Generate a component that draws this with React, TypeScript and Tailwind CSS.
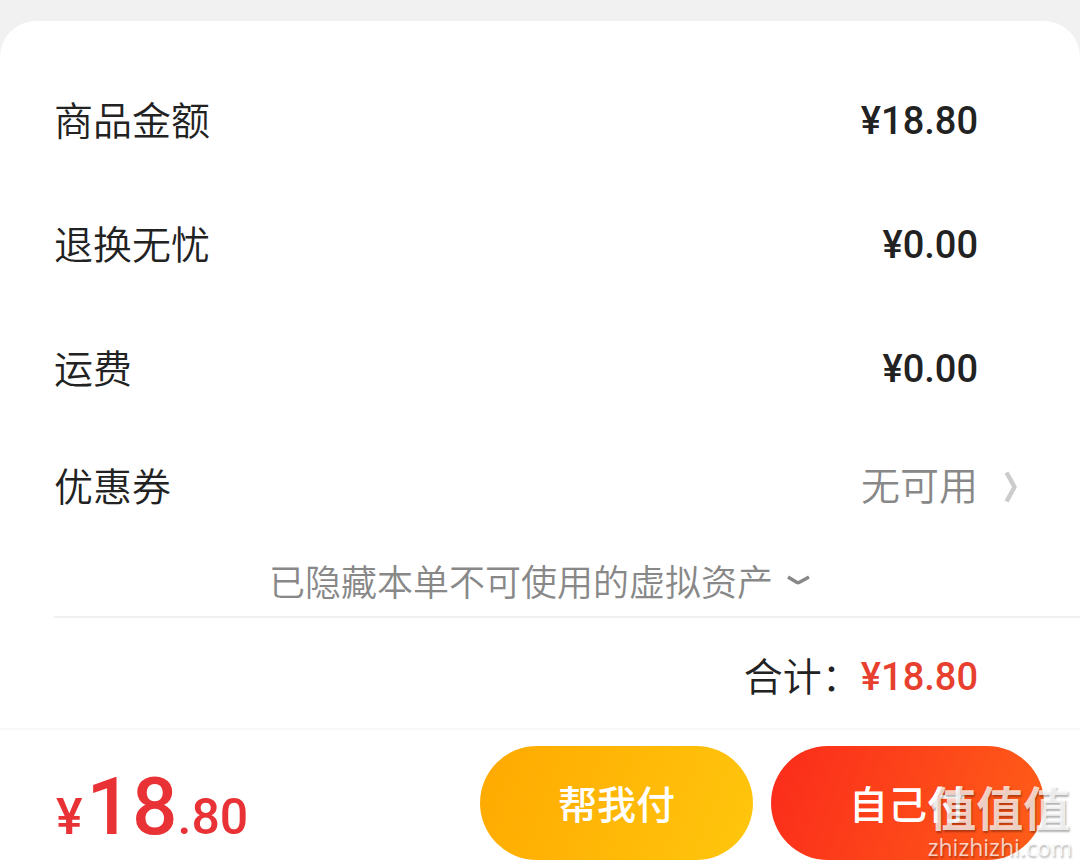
import type { ReactNode } from "react";

function Row({ label, children }: { label: string; children: ReactNode }) {
  return (
    <div className="flex h-[124px] items-center pl-[54px] pr-[102px]">
      <dt className="flex-1 pb-1.5">{label}</dt>
      <dd className="font-['Roboto',sans-serif] text-[38px] font-medium">{children}</dd>
    </div>
  );
}

function Watermark() {
  return (
    <div
      aria-hidden="true"
      className="pointer-events-none absolute right-2 bottom-0 flex flex-col items-center text-white/75 [text-shadow:1px_2px_2px_rgba(0,0,0,0.3)]"
    >
      <span className="text-[47px] leading-[46px] font-bold">值值值</span>
      <span className="font-['Open_Sans',sans-serif] text-[23px] leading-[36px] font-normal">zhizhizhi.com</span>
    </div>
  );
}

export default function App() {
  return (
    <div className="relative flex min-h-screen flex-col bg-[#f1f1f1] pt-[21px] font-['Noto_Sans_CJK_SC',sans-serif] text-[39px] leading-[56px] font-[350] text-[#222222]">
      <main className="flex-1 rounded-t-[36px] bg-white pt-[38px]">
        <dl>
          <Row label="商品金额">¥18.80</Row>
          <Row label="退换无忧">¥0.00</Row>
          <Row label="运费">¥0.00</Row>
        </dl>
        <button type="button" className="flex h-[112px] w-full items-center pl-[54px] pr-[54px] text-left">
          <span className="flex-1 pb-1.5">优惠券</span>
          <span className="pb-2 text-[#888888]">无可用</span>
          <span className="flex w-12 justify-end pr-2">
            <svg width="14" height="32" viewBox="0 0 14 32" fill="none" stroke="#cccccc" strokeWidth="4.5" strokeLinejoin="round" aria-hidden="true">
              <path d="M2.5 1.5 L10.5 16 L2.5 30.5" />
            </svg>
          </span>
        </button>
        <button type="button" className="flex h-[73px] w-full items-center justify-center gap-3 text-[36px] text-[#888888]">
          <span>已隐藏本单不可使用的虚拟资产</span>
          <svg width="26" height="14" viewBox="0 0 26 14" fill="none" stroke="#888888" strokeWidth="3.5" aria-hidden="true">
            <path d="M3 4 L12 9.5 Q13 10 14 9.5 L24 4" />
          </svg>
        </button>
        <div className="ml-[54px] h-0.5 bg-[#f0f0f0]" />
        <div className="flex h-[110px] items-center justify-end pt-2 pr-[102px]">
          <span className="pb-1.5">合计：</span>
          <span className="font-['Roboto',sans-serif] text-[38px] font-medium text-[#e8402f]">¥18.80</span>
        </div>
      </main>
      <footer className="flex h-[137px] items-center gap-[18px] border-t-2 border-[#f7f7f7] bg-white pt-3.5 pr-9 pb-1 pl-14">
        <p className="flex flex-1 items-baseline pt-2 font-['Roboto',sans-serif] text-[50px] font-medium text-[#e93235]">
          <span className="pr-1">¥</span>
          <span className="text-[80px] leading-[96px]">18</span>
          <span>.80</span>
        </p>
        <button type="button" className="h-[114px] w-[273px] rounded-full bg-linear-[110deg] from-[#ffa900] to-[#ffc60d] pb-0.5 font-medium text-white">
          帮我付
        </button>
        <button type="button" className="h-[114px] w-[273px] rounded-full bg-linear-[110deg] from-[#fb2b1b] to-[#ff5f18] pb-0.5 font-medium text-white">
          自己付
        </button>
      </footer>
      <Watermark />
    </div>
  );
}
